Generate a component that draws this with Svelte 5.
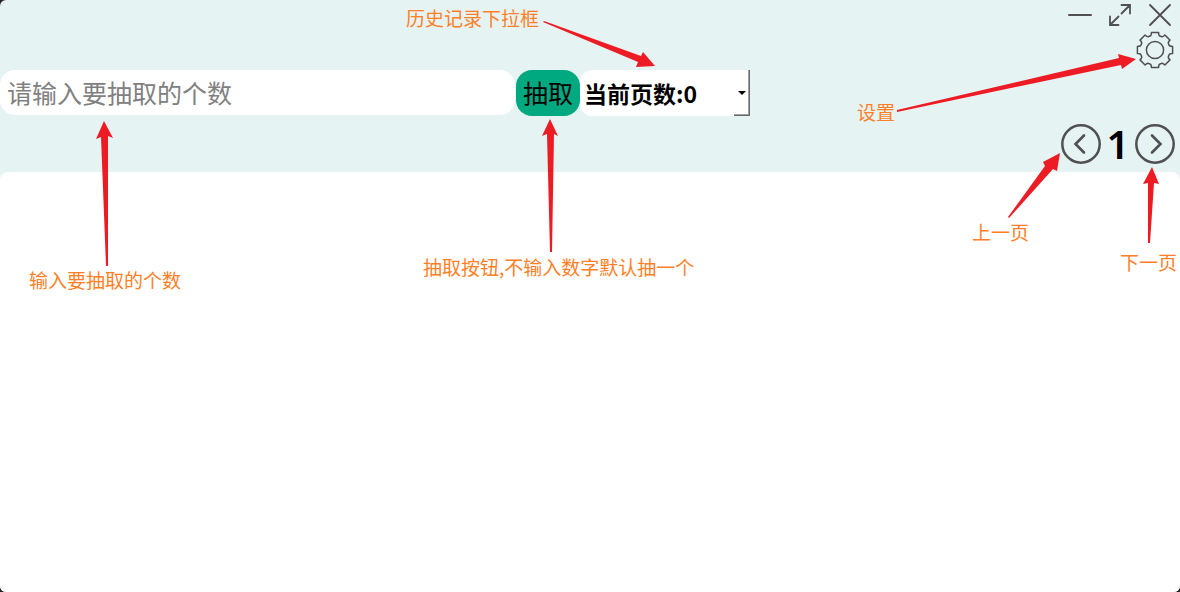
<script>
  let count = $state('');
  let page = $state(1);
  let record = $state('0');

  const arrows = [
    'M108 266 L106 266 L101 137 L96 139 L104 121 L113 138 L108 136 Z',
    'M552 252 L550 252 L547 134 L542 136 L550 119 L558 136 L554 134 Z',
    'M543 22 L544 21 L641 56 L643 52 L655 66 L636 67 L638 62 Z'
  ];
  const rightArrows = [
    'M137 112 L137 110 L359 58 L358 54 L376 59 L362 69 L361 65 Z',
    'M249 218 L248 217 L285 166 L283 162 L300 153 L297 171 L293 169 Z',
    'M390 243 L388 243 L388 183 L383 184 L392 167 L399 184 L394 183 Z'
  ];

  const teeth = [0, 45, 90, 135, 180, 225, 270, 315];
  const turn = (x, y, deg) => {
    const a = (deg * Math.PI) / 180;
    const px = x * Math.cos(a) - y * Math.sin(a);
    const py = x * Math.sin(a) + y * Math.cos(a);
    return `${px.toFixed(2)} ${py.toFixed(2)}`;
  };
  const gear =
    teeth
      .map(
        (d, i) =>
          `${i ? 'L' : 'M'}${turn(-5, -14, d)} Q${turn(-3.6, -14.3, d)} ${turn(-3.6, -17.6, d)} L${turn(3.6, -17.6, d)} Q${turn(3.6, -14.3, d)} ${turn(5, -14, d)}`
      )
      .join(' ') + 'Z';
</script>

<main class="window">
  <header>
    <div class="caption">
      <button aria-label="最小化">
        <svg width="24" height="24" viewBox="0 0 24 24"><path d="M1 12H23" stroke-width="2" /></svg>
      </button>
      <button aria-label="最大化">
        <svg width="24" height="24" viewBox="0 0 24 24"><path d="M13.5 10.5L22 2M13.5 2H22V10.5M10.5 13.5L2 22M2 13.5V22H10.5" stroke-width="1.8" /></svg>
      </button>
      <button aria-label="关闭">
        <svg width="24" height="24" viewBox="0 0 24 24"><path d="M2 2L22 22M22 2L2 22" stroke-width="1.8" /></svg>
      </button>
    </div>
    <div class="settings">
      <button aria-label="设置">
        <svg width="40" height="40" viewBox="-20 -20 40 40"><path d={gear} stroke-width="1.5" stroke-linejoin="round" /><circle r="8.6" stroke-width="1.5" /></svg>
      </button>
    </div>
    <form class="toolbar" onsubmit={(e) => e.preventDefault()}>
      <input type="text" aria-label="抽取个数" placeholder="请输入要抽取的个数" bind:value={count} />
      <button class="draw">抽取</button>
      <div class="history">
        <select aria-label="历史记录" bind:value={record}>
          <option value="0">当前页数:0</option>
        </select>
        <span class="drop"><svg width="8" height="4" viewBox="0 0 8 4"><path d="M0 0H8L4 4Z" /></svg></span>
      </div>
    </form>
    <nav class="pager">
      <button aria-label="上一页" onclick={() => (page = Math.max(1, page - 1))}>
        <svg width="40" height="40" viewBox="0 0 40 40"><circle cx="20" cy="20" r="18.7" stroke-width="2.5" /><path d="M23 11.5L14.5 20L23 28.5" stroke-width="2.6" /></svg>
      </button>
      <span class="page">{page}</span>
      <button aria-label="下一页" onclick={() => (page += 1)}>
        <svg width="40" height="40" viewBox="0 0 40 40"><circle cx="20" cy="20" r="18.7" stroke-width="2.5" /><path d="M17 11.5L25.5 20L17 28.5" stroke-width="2.6" /></svg>
      </button>
    </nav>
  </header>
  <section class="results"></section>

  <div class="notes left">
    <svg width="760" height="300">{#each arrows as d}<path {d} />{/each}</svg>
    <span class="n-history">历史记录下拉框</span>
    <span class="n-input">输入要抽取的个数</span>
    <span class="n-draw">抽取按钮,不输入数字默认抽一个</span>
  </div>
  <div class="notes right">
    <svg width="420" height="300">{#each rightArrows as d}<path {d} />{/each}</svg>
    <span class="n-settings">设置</span>
    <span class="n-prev">上一页</span>
    <span class="n-next">下一页</span>
  </div>
</main>

<style>
  :global(body) {
    margin: 0;
    background: #242226;
  }
  .window {
    position: relative;
    display: flex;
    flex-direction: column;
    min-height: 100vh;
    overflow: hidden;
    border-radius: 6px 0 6px 6px;
    background: #e6f3f3;
    font-family: 'Noto Sans', 'Noto Sans CJK SC', sans-serif;
    color: #000;
  }
  button {
    padding: 0;
    border: 0;
    background: none;
    font: inherit;
    color: inherit;
  }
  svg {
    display: block;
  }
  button svg {
    fill: none;
    stroke: #505050;
    stroke-linecap: round;
  }
  .caption {
    display: flex;
    justify-content: flex-end;
    align-items: center;
    gap: 16px;
    height: 30px;
    padding-right: 8px;
  }
  .settings {
    display: flex;
    justify-content: flex-end;
    height: 40px;
    padding-right: 5px;
  }
  .toolbar {
    display: grid;
    grid-template-columns: 1fr 64px 170px;
    height: 46px;
    margin-right: 430px;
  }
  input {
    box-sizing: border-box;
    min-width: 0;
    height: 45px;
    margin-right: 1px;
    padding: 0 7px 2px;
    border: 0;
    border-radius: 15px;
    outline: 0;
    background: #fff;
    font: 25px 'Noto Sans CJK SC', sans-serif;
  }
  input::placeholder {
    color: #808080;
    opacity: 1;
  }
  .draw {
    padding-bottom: 2px;
    border-radius: 16px;
    background: #00a97f;
    font: 25px 'Noto Sans CJK SC', sans-serif;
  }
  .history {
    position: relative;
    display: flex;
  }
  select {
    appearance: none;
    width: 100%;
    padding: 0 16px 0 4px;
    border: 0;
    border-radius: 12px 0 0 12px;
    background: #fff;
    color: #000;
    font: bold 23px 'Noto Sans CJK SC', sans-serif;
  }
  .drop {
    position: absolute;
    inset: 0 0 0 auto;
    box-sizing: border-box;
    display: grid;
    place-items: center;
    width: 16px;
    border: solid #696969;
    border-width: 0 1px 1px 0;
    box-shadow: inset -1px -1px #a0a0a0;
    pointer-events: none;
  }
  .pager {
    display: flex;
    justify-content: flex-end;
    align-items: center;
    gap: 5px;
    padding: 8px 5px;
  }
  .page {
    width: 24px;
    text-align: center;
    font-size: 40px;
    font-weight: 600;
    line-height: 40px;
  }
  .results {
    flex: 1;
    border-radius: 8px 8px 0 0;
    background: #fff;
  }
  .notes {
    position: absolute;
    top: 0;
    pointer-events: none;
    font: 19px/28px 'Noto Sans CJK SC', sans-serif;
    color: #ff7f27;
  }
  .notes svg {
    fill: #ed1c24;
  }
  .notes span {
    position: absolute;
    white-space: nowrap;
  }
  .left {
    left: 0;
  }
  .right {
    right: 0;
  }
  .n-history {
    left: 406px;
    top: 4px;
  }
  .n-input {
    left: 29px;
    top: 266px;
  }
  .n-draw {
    left: 423px;
    top: 253px;
  }
  .n-settings {
    left: 97px;
    top: 98px;
  }
  .n-prev {
    left: 212px;
    top: 218px;
  }
  .n-next {
    left: 360px;
    top: 248px;
  }
</style>
